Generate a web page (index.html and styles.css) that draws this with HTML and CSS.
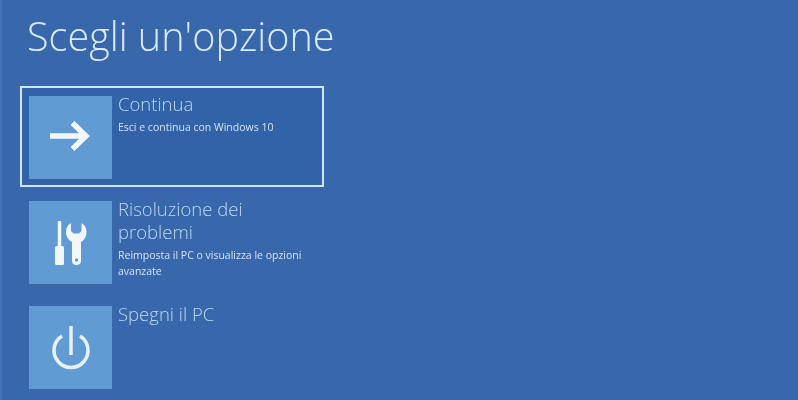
FILE: index.html
```html
<!DOCTYPE html>
<html lang="it">
<head>
  <meta charset="UTF-8">
  <title>Scegli un'opzione</title>
  <link rel="stylesheet" href="styles.css">
</head>
<body>
  <h1 class="title">Scegli un'opzione</h1>

  <div class="options">
    <div class="option selected">
      <div class="tile">
        <svg width="44" height="44" viewBox="0 0 44 44">
          <path d="M1 20H37M23.500 7L37 20L23.500 33" fill="none" stroke="#f2f7fc" stroke-width="5.500"/>
        </svg>
      </div>
      <div class="text">
        <div class="name">Continua</div>
        <div class="desc">Esci e continua con Windows 10</div>
      </div>
    </div>

    <div class="option">
      <div class="tile">
        <svg width="32" height="44" viewBox="0 0 32 44">
          <path d="M4.500 1.500V26" fill="none" stroke="#f2f7fc" stroke-width="3.500" stroke-linecap="round"/>
          <rect x="0" y="25" width="9" height="19" rx="1.500" fill="#f2f7fc"/>
          <path d="M16 2C12.500 4 11 7 11 11C11 16 14 19.500 17 21V40C17 42.500 19 44 21.500 44C24 44 26 42.500 26 40V21C29 19.500 31.500 16 31.500 11C31.500 7 30 4 26.500 2V10L24 12.500H18.500L16 10Z" fill="#f2f7fc"/>
          <circle cx="21.500" cy="39" r="1.700" fill="#609bd4"/>
        </svg>
      </div>
      <div class="text">
        <div class="name">Risoluzione dei problemi</div>
        <div class="desc">Reimposta il PC o visualizza le opzioni avanzate</div>
      </div>
    </div>

    <div class="option">
      <div class="tile">
        <svg width="44" height="44" viewBox="0 0 44 44">
          <path d="M13 10A17 17 0 1 0 31 10" fill="none" stroke="#e8f1fa" stroke-width="3.500"/>
          <path d="M22 0V29" fill="none" stroke="#e8f1fa" stroke-width="3.500"/>
        </svg>
      </div>
      <div class="text">
        <div class="name">Spegni il PC</div>
      </div>
    </div>
  </div>
</body>
</html>
```

FILE: styles.css
```css
html, body {
  height: 100%;
}

body {
  margin: 0;
  padding: 13px 0 0 25px;
  box-sizing: border-box;
  overflow: hidden;
  background: #3868ab;
  border-left: 2px solid #4274b6;
  color: #dcebf8;
  font-family: "Open Sans", "Liberation Sans", sans-serif;
}

/* the source picture is soft, so keep the edges soft too */
.title,
.options {
  filter: blur(0.4px);
}

.title {
  margin: 0;
  font-size: 39.600px;
  line-height: 46px;
  font-weight: 300;
  color: #d8e9f7;
}

.options {
  display: flex;
  flex-direction: column;
  gap: 4px;
  margin: 27px 0 0 -7px;
}

.option {
  box-sizing: border-box;
  display: flex;
  gap: 6px;
  width: 304px;
  height: 101px;
  padding: 8px 7px;
  border: 2px solid transparent;
}

.option.selected {
  border-color: #cde6f6;
  background: #3263a9;
}

.tile {
  flex: none;
  display: flex;
  align-items: center;
  justify-content: center;
  width: 83px;
  height: 83px;
  background: #609bd4;
}

.text {
  width: 192px;
}

.name {
  margin-top: -4px;
  font-size: 18.500px;
  line-height: 23px;
  font-weight: 300;
  color: #bcd8f0;
}

.desc {
  margin-top: 4px;
  font-size: 10.500px;
  line-height: 16px;
  color: #cfe2f4;
}
```
